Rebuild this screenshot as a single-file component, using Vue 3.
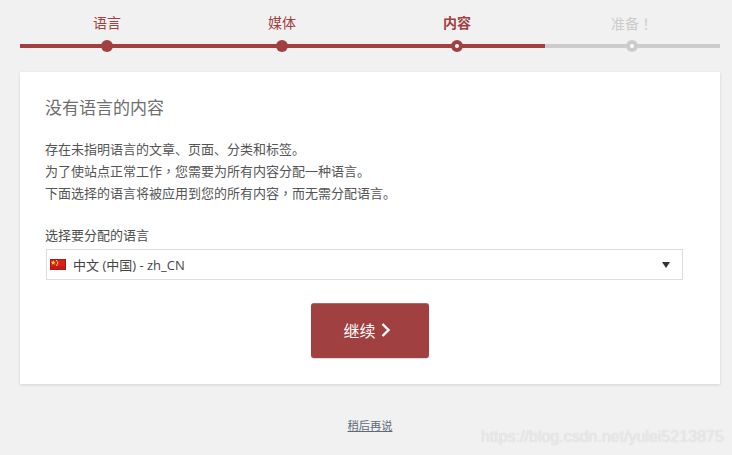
<template>
  <div class="page">
    <ol class="steps">
      <li v-for="step in steps" :key="step.label" :class="['step', `step-${step.state}`]">
        <span class="step-label">{{ step.label }}</span>
        <span class="step-track"><span class="step-dot"></span></span>
      </li>
    </ol>

    <main class="card">
      <h1 class="card-title">没有语言的内容</h1>
      <p class="card-text">
        存在未指明语言的文章、页面、分类和标签。<br />
        为了使站点正常工作<span class="comma">，</span>您需要为所有内容分配一种语言。<br />
        下面选择的语言将被应用到您的所有内容<span class="comma">，</span>而无需分配语言。
      </p>

      <div class="field-label">选择要分配的语言</div>
      <div class="select">
        <svg class="flag" width="16" height="11" viewBox="0 0 16 11">
          <rect width="16" height="11" fill="#d8201c" />
          <rect x="0.5" y="0.5" width="15" height="10" fill="none" stroke="#a81a17" />
          <rect x="1" y="7" width="14" height="3" fill="#c31b18" />
          <path d="M3.2 1.2l.7 1.6 1.7.1-1.3 1.1.4 1.7-1.5-.9-1.5.9.4-1.7-1.3-1.1 1.7-.1z" fill="#ffd83a" />
          <rect x="6" y="1" width="1.2" height="1.2" fill="#ffd83a" />
          <rect x="7" y="2.6" width="1.2" height="1.2" fill="#ffd83a" />
          <rect x="7" y="4.2" width="1.2" height="1.2" fill="#ffd83a" />
          <rect x="6" y="5.6" width="1.2" height="1.2" fill="#ffd83a" />
        </svg>
        <span class="select-value">中文 (中国) - zh_CN</span>
        <span class="select-arrow"></span>
      </div>

      <div class="actions">
        <button class="btn-continue">
          继续
          <svg width="10" height="14" viewBox="0 0 10 14">
            <path d="M1.5 1L7.5 7L1.5 13" fill="none" stroke="#fff" stroke-width="2.4" />
          </svg>
        </button>
      </div>
    </main>

    <div class="later"><a href="#">稍后再说</a></div>

    <span class="watermark">https://blog.csdn.net/yulei5213875</span>
  </div>
</template>

<script setup>
const steps = [
  { label: '语言', state: 'done' },
  { label: '媒体', state: 'done' },
  { label: '内容', state: 'current' },
  { label: '准备！', state: 'todo' }
]
</script>

<style>
html,
body {
  margin: 0;
  background: #f1f1f1;
}
</style>

<style scoped>
.page {
  position: relative;
  height: 455px;
  overflow: hidden;
  padding: 0 12px 0 20px;
  box-sizing: border-box;
  font-family: "Open Sans", "Noto Sans CJK SC", sans-serif;
  color: #555;
  text-spacing-trim: space-all;
}

.steps {
  display: grid;
  grid-template-columns: repeat(4, 175px);
  margin: 0;
  padding: 14px 0 0;
  list-style: none;
}

.step {
  display: flex;
  flex-direction: column;
  align-items: center;
  --step-color: #a04040;
  color: #a04040;
}

.step-todo {
  --step-color: #ccc;
  color: #ccc;
}

.step-label {
  margin-right: 1px;
  font-size: 14px;
  line-height: 18px;
  height: 26px;
}

.step-todo .step-label {
  font-family: "Noto Sans CJK TC", sans-serif;
}

.step-current .step-label {
  font-weight: 700;
}

.step-track {
  display: flex;
  justify-content: center;
  width: 100%;
  height: 12px;
  background: linear-gradient(var(--step-color), var(--step-color)) center / 100% 4px no-repeat;
}

.step-dot {
  width: 12px;
  height: 12px;
  margin-right: 1px;
  border-radius: 50%;
  box-sizing: border-box;
  background: var(--step-color);
}

.step-current .step-dot,
.step-todo .step-dot {
  background: #fff;
  border: 4px solid var(--step-color);
}

.card {
  margin-top: 20px;
  height: 312px;
  box-sizing: border-box;
  padding: 24px 25px 0;
  background: #fff;
  box-shadow: 0 1px 3px rgba(0, 0, 0, 0.13);
}

.card-title {
  margin: 0;
  font-size: 17px;
  font-weight: 400;
  line-height: 24px;
  color: #6e6e6e;
}

.card-text {
  margin: 18px 0 0;
  font-size: 13px;
  line-height: 22px;
}

.comma {
  font-family: "Noto Sans CJK TC", sans-serif;
}

.field-label {
  margin-top: 21px;
  font-size: 13px;
  line-height: 20px;
  color: #4d4d4d;
}

.select {
  display: flex;
  align-items: center;
  margin: 4px 12px 0 1px;
  height: 31px;
  box-sizing: border-box;
  padding: 0 12px 0 3px;
  border: 1px solid #ddd;
  font-size: 13px;
  color: #444;
}

.flag {
  flex: none;
  margin-right: 7px;
}

.select-value {
  flex: 1;
}

.select-arrow {
  width: 0;
  height: 0;
  border-left: 4px solid transparent;
  border-right: 4px solid transparent;
  border-top: 6px solid #333;
}

.actions {
  display: flex;
  justify-content: center;
  margin-top: 23px;
}

.btn-continue {
  display: flex;
  align-items: center;
  justify-content: center;
  gap: 5px;
  width: 118px;
  height: 55px;
  padding: 0 6px 2px 0;
  border: 0;
  border-radius: 3px;
  border-top: 1px solid #b56464;
  background: #a04040;
  color: #fff;
  font-family: inherit;
  font-size: 16px;
  box-shadow: 0 1px 1px rgba(0, 0, 0, 0.15);
}

.later {
  margin-top: 33px;
  text-align: center;
  font-size: 11.25px;
  line-height: 18px;
}

.later a {
  color: #5f6a7a;
  text-decoration: underline;
}

.watermark {
  position: absolute;
  left: 481px;
  top: 427px;
  font-family: "Liberation Sans", sans-serif;
  font-size: 16px;
  line-height: 20px;
  color: rgba(255, 255, 255, 0.6);
  text-shadow: 0 0 1px rgba(0, 0, 0, 0.2);
  white-space: nowrap;
}
</style>
